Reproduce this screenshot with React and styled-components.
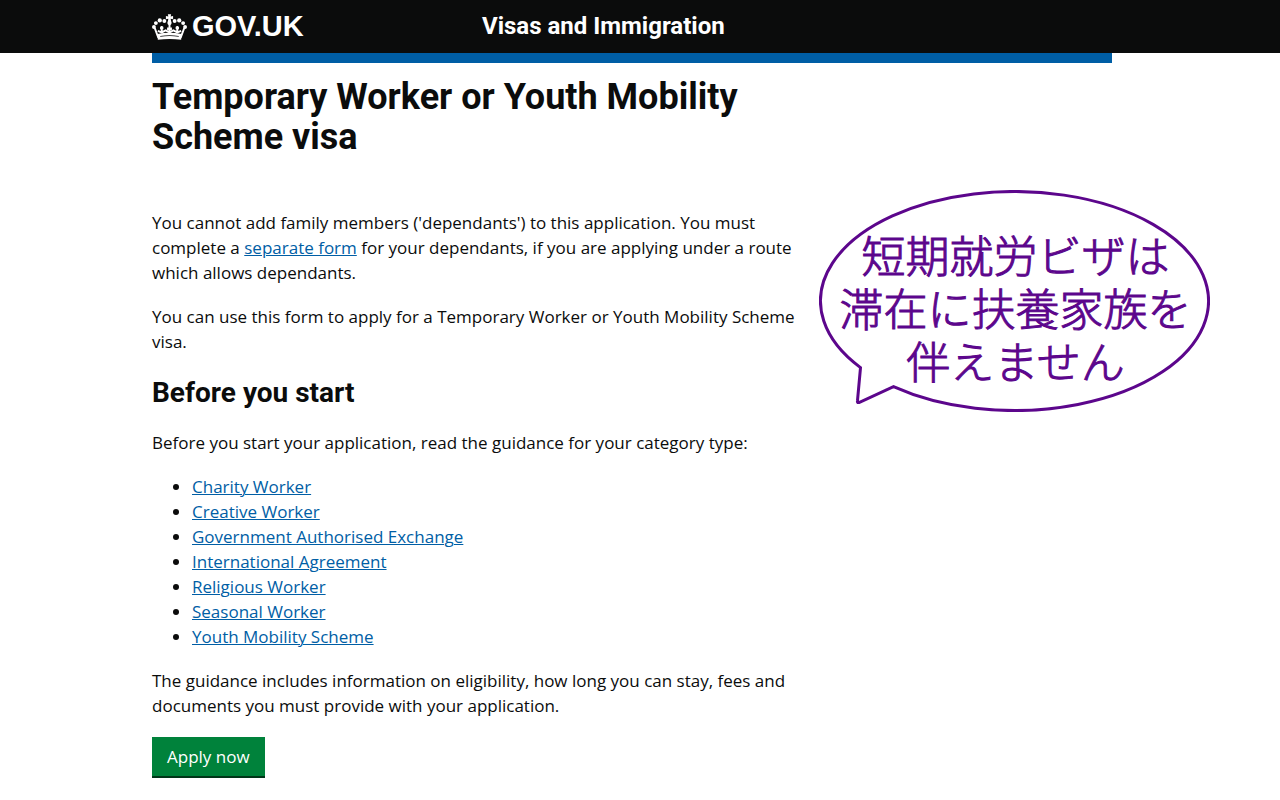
import styled, { createGlobalStyle } from "styled-components";

const guides = [
  "Charity Worker",
  "Creative Worker",
  "Government Authorised Exchange",
  "International Agreement",
  "Religious Worker",
  "Seasonal Worker",
  "Youth Mobility Scheme",
];

export default function App() {
  return (
    <>
      <GlobalStyle />
      <Header>
        <HeaderInner>
          <Logo href="#">
            <Crown />
            GOV.UK
          </Logo>
          <ServiceName href="#">Visas and Immigration</ServiceName>
        </HeaderInner>
      </Header>
      <Container>
        <BlueBar />
        <Columns>
          <Main>
            <Title>Temporary Worker or Youth Mobility Scheme visa</Title>
            <Text>
              You cannot add family members (&apos;dependants&apos;) to this
              application. You must complete a{" "}
              <TextLink href="#">separate form</TextLink> for your dependants,
              if you are applying under a route which allows dependants.
            </Text>
            <Text>
              You can use this form to apply for a Temporary Worker or Youth
              Mobility Scheme visa.
            </Text>
            <SubTitle>Before you start</SubTitle>
            <Text>
              Before you start your application, read the guidance for your
              category type:
            </Text>
            <GuideList>
              {guides.map((guide) => (
                <li key={guide}>
                  <TextLink href="#">{guide}</TextLink>
                </li>
              ))}
            </GuideList>
            <Text>
              The guidance includes information on eligibility, how long you can
              stay, fees and documents you must provide with your application.
            </Text>
            <ApplyButton type="button">Apply now</ApplyButton>
          </Main>
          <Bubble>
            <BubbleShape viewBox="0 0 391 222" aria-hidden="true">
              <path d="M41.5 177.600 A194 109.500 0 1 1 74.500 196.600 L40 212.500 Q38 213 38.500 210.500 Z" />
            </BubbleShape>
            <BubbleText lang="ja">
              短期就労ビザは
              <br />
              滞在に扶養家族を
              <br />
              伴えません
            </BubbleText>
          </Bubble>
        </Columns>
      </Container>
    </>
  );
}

function Crown() {
  return (
    <CrownIcon viewBox="0 0 36 26" aria-hidden="true">
      {/* cross */}
      <path d="M16.300 0h3.400l-.5 2.200 2.500-.5v3.400l-2.500-.5.7 3.800h-3.800l.7-3.800-2.500.5v-3.400l2.500.5z" />
      <circle cx="18" cy="9" r="2.200" />
      {/* pearls */}
      <circle cx="12.700" cy="6.800" r="2" />
      <circle cx="8" cy="6.200" r="2.200" />
      <circle cx="4" cy="9" r="2" />
      <circle cx="2" cy="13" r="2" />
      <circle cx="23.300" cy="6.800" r="2" />
      <circle cx="28" cy="6.200" r="2.200" />
      <circle cx="32" cy="9" r="2" />
      <circle cx="34" cy="13" r="2" />
      {/* arches and band */}
      <path
        d="M2.800 14 L6.500 24 M33.200 14 L29.500 24 M18 10v9 M10 12v7 M26 12v7 M6 17l4 1.500 4-2 4 2 4-2 4 2 4-1.500"
        fill="none"
        stroke="#fff"
        strokeWidth="2"
      />
      <path d="M8.300 12.800h3.400v2.400h-3.400zM24.300 12.800h3.400v2.400h-3.400zM15.500 13.500h5v2.500h-5z" />
      <path d="M5.500 20.200 Q18 17.500 30.500 20.200 L30 26 Q18 24.500 6 26 Z M8.500 22.200 Q18 20.600 27.500 22.200 L27.500 23 Q18 21.600 8.500 23 Z" fillRule="evenodd" />
    </CrownIcon>
  );
}

const GlobalStyle = createGlobalStyle`
  * {
    box-sizing: border-box;
  }
  body {
    margin: 0;
    padding-right: 16px;
    background-color: #fff;
    color: #0b0c0c;
    font-family: "Open Sans", "Noto Sans CJK JP", sans-serif;
    font-size: 17px;
    line-height: 25px;
  }
`;

const Header = styled.header`
  margin-right: -16px;
  padding-right: 16px;
  background-color: #0b0c0c;
`;

const HeaderInner = styled.div`
  display: flex;
  align-items: center;
  max-width: 960px;
  height: 53px;
  margin: 0 auto;
`;

const Logo = styled.a`
  display: flex;
  align-items: center;
  gap: 5px;
  width: 330px;
  color: #fff;
  font-family: "Liberation Sans", sans-serif;
  font-size: 29px;
  font-weight: 700;
  text-decoration: none;
`;

const CrownIcon = styled.svg`
  width: 35px;
  height: 26px;
  fill: #fff;
`;

const ServiceName = styled.a`
  color: #fff;
  font-family: Roboto, sans-serif;
  font-size: 24px;
  font-weight: 700;
  text-decoration: none;
`;

const Container = styled.div`
  max-width: 960px;
  margin: 0 auto;
`;

const BlueBar = styled.div`
  height: 10px;
  background-color: #005ea5;
`;

const Columns = styled.div`
  display: flex;
  gap: 17px;
`;

const Main = styled.main`
  flex: 0 0 650px;
  padding: 14px 0 20px;
`;

const Title = styled.h1`
  max-width: 600px;
  margin: 0 0 53px;
  font-family: Roboto, sans-serif;
  font-size: 36px;
  font-weight: 700;
  line-height: 40px;
`;

const SubTitle = styled.h2`
  margin: 0 0 22px;
  padding-top: 5px;
  font-family: Roboto, sans-serif;
  font-size: 28px;
  font-weight: 700;
  line-height: 30px;
`;

const Text = styled.p`
  margin: 0 0 19px;
`;

const TextLink = styled.a`
  color: #005ea5;
  text-decoration: underline;
  text-decoration-thickness: 1px;
`;

const GuideList = styled.ul`
  margin: 0 0 19px;
  padding-left: 40px;
`;

const ApplyButton = styled.button`
  padding: 7px 15px;
  border: 0;
  border-bottom: 2px solid #003618;
  background-color: #00823b;
  color: #fff;
  font-family: inherit;
  font-size: 17px;
  line-height: 25px;
  cursor: pointer;
`;

const Bubble = styled.aside`
  display: grid;
  flex: 0 0 391px;
  align-self: flex-start;
  margin-top: 127px;
  color: #5c068c;
`;

const BubbleShape = styled.svg`
  grid-area: 1 / 1;
  width: 391px;
  height: 222px;
  fill: none;
  stroke: currentColor;
  stroke-width: 3;
`;

const BubbleText = styled.p`
  grid-area: 1 / 1;
  margin: 0;
  padding: 38px 0 0 2px;
  font-family: "Noto Sans CJK JP", sans-serif;
  font-size: 44px;
  font-weight: 300;
  line-height: 53px;
  text-align: center;
  white-space: nowrap;
  -webkit-text-stroke: 1px currentColor;
`;
